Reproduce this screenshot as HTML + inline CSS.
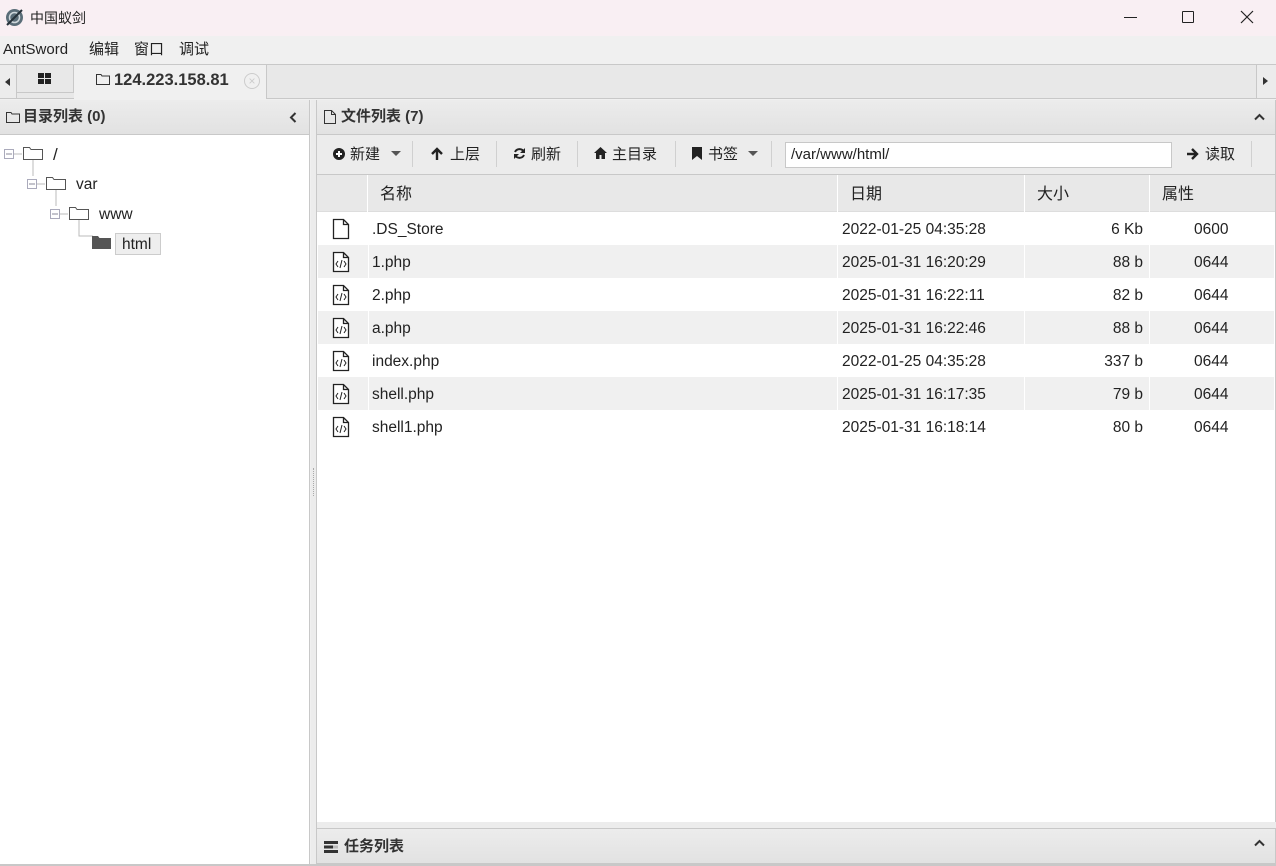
<!DOCTYPE html>
<html><head><meta charset="utf-8"><style>
*{box-sizing:border-box;margin:0;padding:0}
body{width:1276px;height:866px;overflow:hidden;background:#f0f0f0;font-family:"Liberation Sans","Noto Sans CJK SC",sans-serif;font-size:15px;color:#222;position:relative;line-height:20px}
.a{position:absolute}
.title{left:0;top:0;width:1276px;height:36px;background:#f9eff3}
.menu{left:0;top:36px;width:1276px;height:28px;background:#f0f0f0;font-size:15px}
.menu span{position:absolute;top:4px;line-height:20px}
.tabs{left:0;top:64px;width:1276px;height:35px;background:#e8e8e8;border-top:1px solid #c8c8c8;border-bottom:1px solid #c8c8c8}
.hdr{background:linear-gradient(#ececec,#e2e2e2);border-bottom:1px solid #c8c8c8;height:35px}
.b{font-weight:bold}
.row{position:absolute;left:318px;width:956px;height:33px;font-size:15.5px}
.row span{position:absolute;top:8px}
.tb{position:absolute;top:10px;font-size:15px}
.sep{position:absolute;top:6px;width:1px;height:26px;background:#d0d0d0}
</style></head><body>
<div class="a title">
 <svg class="a" style="left:5px;top:8px" width="19" height="19" viewBox="0 0 19 19"><circle cx="9.5" cy="9.5" r="8.5" fill="#5a6d78"/><circle cx="9.5" cy="9.5" r="5" fill="none" stroke="#cfd8dc" stroke-width="1.5"/><path d="M2 17L17 2" stroke="#26323a" stroke-width="2"/></svg>
 <span class="a" style="left:30px;top:8px;font-size:14px">中国蚁剑</span>
 <div class="a" style="left:1124px;top:17px;width:13px;height:1px;background:#222"></div>
 <div class="a" style="left:1182px;top:11px;width:12px;height:12px;border:1px solid #222;border-radius:1px"></div>
 <svg class="a" style="left:1240px;top:10px" width="14" height="14"><path d="M1 1L13 13M13 1L1 13" stroke="#222" stroke-width="1.2"/></svg>
</div>
<div class="a menu"><span style="left:3px">AntSword</span><span style="left:89px">编辑</span><span style="left:134px">窗口</span><span style="left:179px">调试</span></div>
<div class="a tabs">
 <div class="a" style="left:0;top:0;width:17px;height:33px;border-right:1px solid #c8c8c8;background:#ececec"></div>
 <div class="a" style="left:5px;top:13px;width:0;height:0;border-top:4px solid transparent;border-bottom:4px solid transparent;border-right:5px solid #333"></div>
 <div class="a" style="left:17px;top:0;width:57px;height:28px;border-right:1px solid #c8c8c8;border-bottom:1px solid #c8c8c8;background:#e8e8e8"></div>
 <svg class="a" style="left:38px;top:8px" width="14" height="12"><rect x="0" y="0" width="6" height="5" fill="#222"/><rect x="7" y="0" width="6" height="5" fill="#222"/><rect x="0" y="6" width="6" height="5" fill="#222"/><rect x="7" y="6" width="6" height="5" fill="#222"/></svg>
 <div class="a" style="left:74px;top:0;width:193px;height:34px;background:#f0f0f0;border-right:1px solid #c8c8c8"></div>
 <svg class="a" style="left:96px;top:8px" width="14" height="12"><path d="M0.5 1.5H5l1 1.5h7.5v8.5H0.5z" fill="none" stroke="#333"/></svg>
 <span class="a b" style="left:114px;top:5px;font-size:16.5px;color:#333">124.223.158.81</span>
 <div class="a" style="left:244px;top:8px;width:16px;height:16px;border-radius:50%;border:1px solid #ccc;color:#ccc;font-size:12px;line-height:14px;text-align:center">×</div>
 <div class="a" style="left:1256px;top:0;width:20px;height:33px;border-left:1px solid #c8c8c8;background:#ececec"></div>
 <div class="a" style="left:1263px;top:12px;width:0;height:0;border-top:4px solid transparent;border-bottom:4px solid transparent;border-left:5px solid #333"></div>
</div>
<div class="a" style="left:0;top:100px;width:310px;height:766px;background:#fff;border-right:1px solid #c8c8c8">
 <div class="hdr" style="position:relative">
  <svg class="a" style="left:6px;top:11px" width="14" height="12"><path d="M0.5 1.5H5l1 1.5h7.5v8.5H0.5z" fill="none" stroke="#333"/></svg>
  <span class="a b" style="left:23px;top:7px;color:#333">目录列表 (0)</span>
  <svg class="a" style="left:289px;top:12px" width="8" height="11"><path d="M6.5 1L2 5.5 6.5 10" fill="none" stroke="#333" stroke-width="2"/></svg>
 </div>
 <svg class="a" style="left:0;top:40px" width="170" height="120">
  <g fill="none" stroke="#bbb"><path d="M33 14v22M56 44v22M79 74v22h14"/><path d="M14 14h8M37 44h8M60 74h8"/></g>
  <g fill="#fff" stroke="#aab"><rect x="4.5" y="9.5" width="9" height="9"/><rect x="27.5" y="39.5" width="9" height="9"/><rect x="50.5" y="69.5" width="9" height="9"/></g>
  <g stroke="#889"><path d="M6 14h6M29 44h6M52 74h6"/></g>
  <g fill="#fff" stroke="#555"><path d="M23.5 7.5h6l1.5 2h11.5v10h-19z"/><path d="M46.5 37.5h6l1.5 2h11.5v10h-19z"/><path d="M69.5 67.5h6l1.5 2h11.5v10h-19z"/></g>
  <path d="M92 96h6l1.5 2h11.5v11H92z" fill="#555"/>
  <rect x="115.5" y="93.5" width="45" height="21" fill="#eee" stroke="#ccc"/>
 </svg>
 <span class="a" style="left:53px;top:45px;font-size:17px">/</span>
 <span class="a" style="left:76px;top:75px;font-size:15.5px">var</span>
 <span class="a" style="left:99px;top:105px;font-size:15.5px">www</span>
 <span class="a" style="left:122px;top:135px;font-size:15.5px">html</span>
</div>
<div class="a" style="left:311px;top:100px;width:6px;height:766px;background:#ececec;border-right:1px solid #c8c8c8"></div>
<div class="a" style="left:313px;top:468px;width:1px;height:28px;border-left:1px dotted #aaa"></div>
<div class="a" style="left:317px;top:100px;width:959px;height:728px;background:#fff;border-right:1px solid #c8c8c8">
 <div class="hdr" style="position:relative">
  <svg class="a" style="left:7px;top:10px" width="12" height="14"><path d="M0.5 0.5h7l4 4v9h-11z M7.5 0.5v4h4" fill="none" stroke="#333"/></svg>
  <span class="a b" style="left:24px;top:7px;color:#333">文件列表 (7)</span>
  <svg class="a" style="left:937px;top:13px" width="11" height="8"><path d="M1 6.5L5.5 2 10 6.5" fill="none" stroke="#333" stroke-width="2"/></svg>
 </div>
 <div style="position:relative;height:40px;background:#ececec;border-bottom:1px solid #c8c8c8">
  <svg class="a" style="left:16px;top:13px" width="12" height="12"><circle cx="6" cy="6" r="6" fill="#222"/><path d="M6 3v6M3 6h6" stroke="#fff" stroke-width="2"/></svg>
  <span class="tb" style="left:33px">新建</span>
  <div class="a" style="left:74px;top:16px;border-left:5px solid transparent;border-right:5px solid transparent;border-top:5px solid #555"></div>
  <div class="sep" style="left:95px"></div>
  <svg class="a" style="left:114px;top:12px" width="12" height="13"><path d="M6 13V2M1 7l5-5 5 5" fill="none" stroke="#222" stroke-width="2.4"/></svg>
  <span class="tb" style="left:133px">上层</span>
  <div class="sep" style="left:179px"></div>
  <svg class="a" style="left:196px;top:12px" width="13" height="13"><path d="M11 5A5 5 0 0 0 2 5M2 8a5 5 0 0 0 9 0" fill="none" stroke="#222" stroke-width="2"/><path d="M12 1v5H7zM1 12V7h5z" fill="#222"/></svg>
  <span class="tb" style="left:214px">刷新</span>
  <div class="sep" style="left:260px"></div>
  <svg class="a" style="left:277px;top:12px" width="13" height="12"><path d="M6.5 0L0 6h2v6h3.5V8h2v4H11V6h2z" fill="#222"/></svg>
  <span class="tb" style="left:295px">主目录</span>
  <div class="sep" style="left:358px"></div>
  <svg class="a" style="left:375px;top:12px" width="10" height="13"><path d="M0 0h10v13L5 9 0 13z" fill="#222"/></svg>
  <span class="tb" style="left:391px">书签</span>
  <div class="a" style="left:431px;top:16px;border-left:5px solid transparent;border-right:5px solid transparent;border-top:5px solid #555"></div>
  <div class="sep" style="left:454px"></div>
  <div class="a" style="left:468px;top:7px;width:387px;height:26px;background:#fff;border:1px solid #c8c8c8;padding:2px 5px;font-size:15px">/var/www/html/</div>
  <svg class="a" style="left:870px;top:13px" width="12" height="12"><path d="M0 6h9M5 1l5 5-5 5" fill="none" stroke="#222" stroke-width="2.4"/></svg>
  <span class="tb" style="left:888px">读取</span>
  <div class="sep" style="left:934px"></div>
 </div>
 <div style="position:relative;height:37px;background:#e8e8e8;border-bottom:1px solid #ddd;font-size:16px">
  <div class="a" style="left:50px;top:0;width:1px;height:37px;background:#fff"></div>
  <div class="a" style="left:520px;top:0;width:1px;height:37px;background:#fff"></div>
  <div class="a" style="left:707px;top:0;width:1px;height:37px;background:#fff"></div>
  <div class="a" style="left:832px;top:0;width:1px;height:37px;background:#fff"></div>
  <span class="a" style="left:63px;top:10px">名称</span>
  <span class="a" style="left:533px;top:10px">日期</span>
  <span class="a" style="left:720px;top:10px">大小</span>
  <span class="a" style="left:845px;top:10px">属性</span>
 </div>
</div>
<div class="row" style="top:212px;background:#fff"><span style="left:54px">.DS_Store</span><span style="left:524px">2022-01-25 04:35:28</span><span style="right:131px">6 Kb</span><span style="left:876px">0600</span></div>
<div class="row" style="top:245px;background:#f0f0f0"><span style="left:54px">1.php</span><span style="left:524px">2025-01-31 16:20:29</span><span style="right:131px">88 b</span><span style="left:876px">0644</span></div>
<div class="row" style="top:278px;background:#fff"><span style="left:54px">2.php</span><span style="left:524px">2025-01-31 16:22:11</span><span style="right:131px">82 b</span><span style="left:876px">0644</span></div>
<div class="row" style="top:311px;background:#f0f0f0"><span style="left:54px">a.php</span><span style="left:524px">2025-01-31 16:22:46</span><span style="right:131px">88 b</span><span style="left:876px">0644</span></div>
<div class="row" style="top:344px;background:#fff"><span style="left:54px">index.php</span><span style="left:524px">2022-01-25 04:35:28</span><span style="right:131px">337 b</span><span style="left:876px">0644</span></div>
<div class="row" style="top:377px;background:#f0f0f0"><span style="left:54px">shell.php</span><span style="left:524px">2025-01-31 16:17:35</span><span style="right:131px">79 b</span><span style="left:876px">0644</span></div>
<div class="row" style="top:410px;background:#fff"><span style="left:54px">shell1.php</span><span style="left:524px">2025-01-31 16:18:14</span><span style="right:131px">80 b</span><span style="left:876px">0644</span></div>
<svg class="a" style="left:318px;top:212px" width="50" height="231">
 <g fill="#fff" stroke="#222" stroke-width="1.3">
  <path d="M15.5 7.5h10l5 5v14h-15z M25.5 7.5v5h5"/>
  <path d="M15.5 40.5h10l5 5v14h-15z M25.5 40.5v5h5"/>
  <path d="M15.5 73.5h10l5 5v14h-15z M25.5 73.5v5h5"/>
  <path d="M15.5 106.5h10l5 5v14h-15z M25.5 106.5v5h5"/>
  <path d="M15.5 139.5h10l5 5v14h-15z M25.5 139.5v5h5"/>
  <path d="M15.5 172.5h10l5 5v14h-15z M25.5 172.5v5h5"/>
  <path d="M15.5 205.5h10l5 5v14h-15z M25.5 205.5v5h5"/>
 </g>
 <g fill="none" stroke="#222" stroke-width="1">
  <path d="M20 49l-2 3 2 3M26 49l2 3-2 3M24 48l-2 8"/>
  <path d="M20 82l-2 3 2 3M26 82l2 3-2 3M24 81l-2 8"/>
  <path d="M20 115l-2 3 2 3M26 115l2 3-2 3M24 114l-2 8"/>
  <path d="M20 148l-2 3 2 3M26 148l2 3-2 3M24 147l-2 8"/>
  <path d="M20 181l-2 3 2 3M26 181l2 3-2 3M24 180l-2 8"/>
  <path d="M20 214l-2 3 2 3M26 214l2 3-2 3M24 213l-2 8"/>
 </g>
</svg>
<div class="a" style="left:368px;top:212px;width:1px;height:231px;background:#fff"></div>
<div class="a" style="left:837px;top:212px;width:1px;height:231px;background:#fff"></div>
<div class="a" style="left:1024px;top:212px;width:1px;height:231px;background:#fff"></div>
<div class="a" style="left:1149px;top:212px;width:1px;height:231px;background:#fff"></div>
<div class="a" style="left:317px;top:822px;width:959px;height:6px;background:#ececec"></div>
<div class="a hdr" style="left:317px;top:828px;width:959px;height:36px;border-top:1px solid #c8c8c8;border-right:1px solid #c8c8c8">
 <svg class="a" style="left:7px;top:12px" width="14" height="12"><rect y="0" width="14" height="3" fill="#333"/><rect y="4.5" width="14" height="3" fill="#333"/><rect y="9" width="14" height="3" fill="#333"/><rect x="9" y="4.5" width="5" height="3" fill="#bbb"/></svg>
 <span class="a b" style="left:27px;top:8px;color:#333">任务列表</span>
 <svg class="a" style="left:937px;top:10px" width="11" height="8"><path d="M1 6.5L5.5 2 10 6.5" fill="none" stroke="#333" stroke-width="2"/></svg>
</div>
<div class="a" style="left:0;top:864px;width:1276px;height:2px;background:#c8c8c8"></div>
</body></html>
